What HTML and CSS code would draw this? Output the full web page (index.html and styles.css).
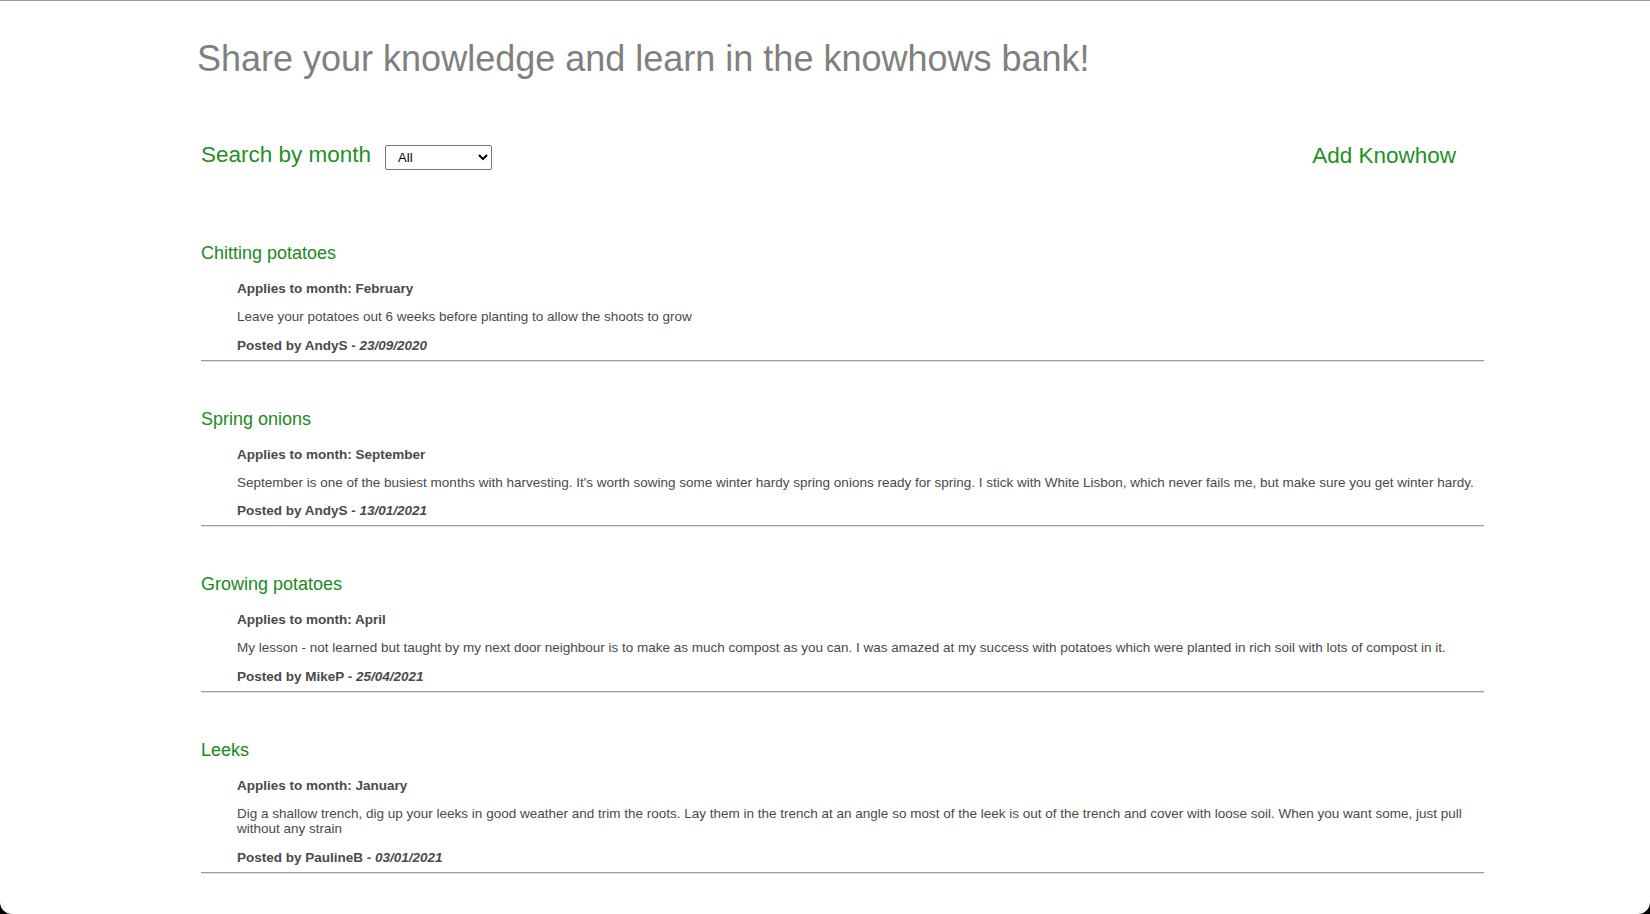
FILE: index.html
```html
<!DOCTYPE html>
<html lang="en">
<head>
<meta charset="utf-8">
<title>Knowhows bank</title>
<link rel="stylesheet" href="styles.css">
</head>
<body>
<div class="page">
  <h1 class="headline">Share your knowledge and learn in the knowhows bank!</h1>
  <div class="toolbar">
    <div class="search">
      <span class="search-label">Search by month</span>
      <select class="month-select">
        <option>All</option>
        <option>January</option>
        <option>February</option>
      </select>
    </div>
    <a class="add-link" href="#">Add Knowhow</a>
  </div>

  <div class="list">
    <div class="item">
      <h3 class="item-title">Chitting potatoes</h3>
      <div class="item-body">
        <p class="item-month">Applies to month: February</p>
        <p class="item-text">Leave your potatoes out 6 weeks before planting to allow the shoots to grow</p>
        <p class="item-meta">Posted by AndyS - <em>23/09/2020</em></p>
      </div>
    </div>
    <div class="item">
      <h3 class="item-title">Spring onions</h3>
      <div class="item-body">
        <p class="item-month">Applies to month: September</p>
        <p class="item-text">September is one of the busiest months with harvesting. It's worth sowing some winter hardy spring onions ready for spring. I stick with White Lisbon, which never fails me, but make sure you get winter hardy.</p>
        <p class="item-meta">Posted by AndyS - <em>13/01/2021</em></p>
      </div>
    </div>
    <div class="item">
      <h3 class="item-title">Growing potatoes</h3>
      <div class="item-body">
        <p class="item-month">Applies to month: April</p>
        <p class="item-text">My lesson - not learned but taught by my next door neighbour is to make as much compost as you can. I was amazed at my success with potatoes which were planted in rich soil with lots of compost in it.</p>
        <p class="item-meta">Posted by MikeP - <em>25/04/2021</em></p>
      </div>
    </div>
    <div class="item">
      <h3 class="item-title">Leeks</h3>
      <div class="item-body">
        <p class="item-month">Applies to month: January</p>
        <p class="item-text">Dig a shallow trench, dig up your leeks in good weather and trim the roots. Lay them in the trench at an angle so most of the leek is out of the trench and cover with loose soil. When you want some, just pull without any strain</p>
        <p class="item-meta">Posted by PaulineB - <em>03/01/2021</em></p>
      </div>
    </div>
  </div>
</div>
</body>
</html>
```

FILE: styles.css
```css
html, body {
  margin: 0;
  padding: 0;
  background: #000;
}

body {
  font-family: "Liberation Sans", Arial, Helvetica, sans-serif;
}

.page {
  box-sizing: border-box;
  height: 914px;
  background: #fff;
  border-top: 1px solid #9a9a9a;
  border-radius: 0 0 12px 12px;
  padding: 37px 166px 0 201px;
  overflow: hidden;
}

.headline {
  margin: 0 0 0 -4px;
  font-size: 36px;
  line-height: 42px;
  font-weight: normal;
  color: #808080;
}

.toolbar {
  display: flex;
  justify-content: space-between;
  align-items: flex-start;
  height: 30px;
  margin-top: 62px;
}

.search {
  display: flex;
  align-items: flex-start;
  gap: 14px;
}

.search-label {
  font-size: 22.5px;
  line-height: 26px;
  color: #1f8f1f;
}

.month-select {
  margin-top: 3px;
  width: 107px;
  height: 25px;
  font-family: "Liberation Sans", Arial, sans-serif;
  font-size: 13px;
  color: #000;
  background: #fff;
  border: 1px solid #767676;
  border-radius: 2px;
  padding: 0 4px 0 8px;
}

.add-link {
  margin-top: 1px;
  margin-right: 28px;
  font-size: 22.5px;
  line-height: 26px;
  color: #1f8f1f;
  text-decoration: none;
}

.list {
  margin-top: 23px;
}

.item {
  padding-top: 47px;
  border-bottom: 1px solid #9c9c9c;
  box-shadow: 0 1px 0 #e2e2e2;
  padding-bottom: 7px;
}

.item-title {
  margin: 0 0 17px;
  font-size: 18px;
  line-height: 22px;
  font-weight: normal;
  color: #1a8a1a;
}

.item-body {
  margin-left: 36px;
  font-size: 13.5px;
  line-height: 15px;
  color: #4a4a4a;
}

.item-body p {
  margin: 0;
}

.item-month {
  font-weight: bold;
  margin-bottom: 13px !important;
}

.item-text {
  margin-bottom: 13px !important;
  line-height: 15.5px;
}

.item-meta {
  font-weight: bold;
}
```
